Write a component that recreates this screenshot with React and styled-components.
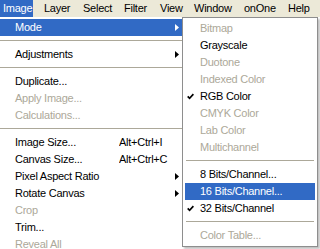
import React from "react";
import styled, { createGlobalStyle } from "styled-components";

const GlobalStyle = createGlobalStyle`
  html, body {
    margin: 0;
    padding: 0;
    background: #fff;
  }
  body {
    font-family: "Liberation Sans", Arial, sans-serif;
    font-size: 11px;
    letter-spacing: -0.25px;
  }
`;

const Screen = styled.div`
  width: 320px;
  height: 249px;
  overflow: hidden;
  background: #fff;
  display: flex;
  flex-direction: column;
`;

const TitleEdge = styled.div`
  height: 1px;
  background: #3a6bc4;
`;

const MenuBar = styled.div`
  height: 19px;
  background: #ece9d8;
  display: flex;
  align-items: flex-start;
`;

const BarItem = styled.div`
  height: 17px;
  line-height: 17px;
  width: ${(p) => p.$w}px;
  padding-left: ${(p) => (p.$active ? 3 : 6)}px;
  margin-right: ${(p) => (p.$active ? 5 : 0)}px;
  box-sizing: border-box;
  color: ${(p) => (p.$active ? "#fff" : "#000")};
  background: ${(p) => (p.$active ? "#316ac5" : "transparent")};
  white-space: nowrap;
`;

const Body = styled.div`
  flex: 1;
  display: flex;
  align-items: flex-start;
`;

const MainMenu = styled.div`
  width: 182px;
  padding-top: 2px;
  background: #fff;
  flex-shrink: 0;
`;

const SubMenu = styled.div`
  width: 136px;
  box-sizing: border-box;
  border: 1px solid #8e8e8e;
  padding: 2px;
  background: #fff;
  box-shadow: 2px 2px 2px rgba(0, 0, 0, 0.25);
  flex-shrink: 0;
`;

const MainRow = styled.div`
  height: 17px;
  line-height: 17px;
  display: grid;
  grid-template-columns: 104px 1fr 7px;
  padding: 0 3px 0 15px;
  color: ${(p) => (p.$active ? "#fff" : p.$disabled ? "#aca899" : "#000")};
  background: ${(p) => (p.$active ? "#316ac5" : "transparent")};
  white-space: nowrap;
`;

const SubRow = styled.div`
  height: 17px;
  line-height: 17px;
  display: grid;
  grid-template-columns: 15px 1fr;
  color: ${(p) => (p.$active ? "#fff" : p.$disabled ? "#aca899" : "#000")};
  background: ${(p) => (p.$active ? "#316ac5" : "transparent")};
  white-space: nowrap;
`;

const Shortcut = styled.span`
  overflow: hidden;
`;

const Mark = styled.span`
  display: flex;
  align-items: center;
  justify-content: ${(p) => (p.$left ? "flex-start" : "flex-end")};
  padding-left: ${(p) => (p.$left ? 2 : 0)}px;
`;

const Separator = styled.div`
  height: 10px;
  display: flex;
  align-items: flex-start;
  padding: 4px ${(p) => (p.$inset ? 1 : 0)}px 0;
  box-sizing: border-box;

  &::before {
    content: "";
    flex: 1;
    height: 1px;
    background: #aca899;
  }
`;

const Arrow = ({ color }) => (
  <svg width="4" height="7" viewBox="0 0 4 7">
    <polygon points="0,0 4,3.5 0,7" fill={color} />
  </svg>
);

const Check = () => (
  <svg width="7" height="7" viewBox="0 0 7 7">
    <polyline
      points="0.7,3.3 2.6,5.3 6.4,1.2"
      fill="none"
      stroke="#000"
      strokeWidth="1.7"
    />
  </svg>
);

const bar = [
  { label: "Image", w: 33, active: true },
  { label: "Layer", w: 39 },
  { label: "Select", w: 41 },
  { label: "Filter", w: 36 },
  { label: "View", w: 34 },
  { label: "Window", w: 50 },
  { label: "onOne", w: 44 },
  { label: "Help", w: 33 },
];

const mainItems = [
  { label: "Mode", sub: true, active: true },
  { sep: true },
  { label: "Adjustments", sub: true },
  { sep: true },
  { label: "Duplicate..." },
  { label: "Apply Image...", disabled: true },
  { label: "Calculations...", disabled: true },
  { sep: true },
  { label: "Image Size...", keys: "Alt+Ctrl+I" },
  { label: "Canvas Size...", keys: "Alt+Ctrl+C" },
  { label: "Pixel Aspect Ratio", sub: true },
  { label: "Rotate Canvas", sub: true },
  { label: "Crop", disabled: true },
  { label: "Trim..." },
  { label: "Reveal All", disabled: true },
];

const modeItems = [
  { label: "Bitmap", disabled: true },
  { label: "Grayscale" },
  { label: "Duotone", disabled: true },
  { label: "Indexed Color", disabled: true },
  { label: "RGB Color", checked: true },
  { label: "CMYK Color", disabled: true },
  { label: "Lab Color", disabled: true },
  { label: "Multichannel", disabled: true },
  { sep: true },
  { label: "8 Bits/Channel..." },
  { label: "16 Bits/Channel...", active: true },
  { label: "32 Bits/Channel", checked: true },
  { sep: true },
  { label: "Color Table...", disabled: true },
];

export default function App() {
  return (
    <>
      <GlobalStyle />
      <Screen>
        <TitleEdge />
        <MenuBar>
          {bar.map((b) => (
            <BarItem key={b.label} $w={b.w} $active={b.active}>
              {b.label}
            </BarItem>
          ))}
        </MenuBar>
        <Body>
          <MainMenu>
            {mainItems.map((item, i) =>
              item.sep ? (
                <Separator key={i} />
              ) : (
                <MainRow key={i} $active={item.active} $disabled={item.disabled}>
                  <span>{item.label}</span>
                  <Shortcut>{item.keys}</Shortcut>
                  <Mark>
                    {item.sub && <Arrow color={item.active ? "#fff" : "#000"} />}
                  </Mark>
                </MainRow>
              )
            )}
          </MainMenu>
          <SubMenu>
            {modeItems.map((item, i) =>
              item.sep ? (
                <Separator key={i} $inset />
              ) : (
                <SubRow key={i} $active={item.active} $disabled={item.disabled}>
                  <Mark $left>{item.checked && <Check />}</Mark>
                  <span>{item.label}</span>
                </SubRow>
              )
            )}
          </SubMenu>
        </Body>
      </Screen>
    </>
  );
}
